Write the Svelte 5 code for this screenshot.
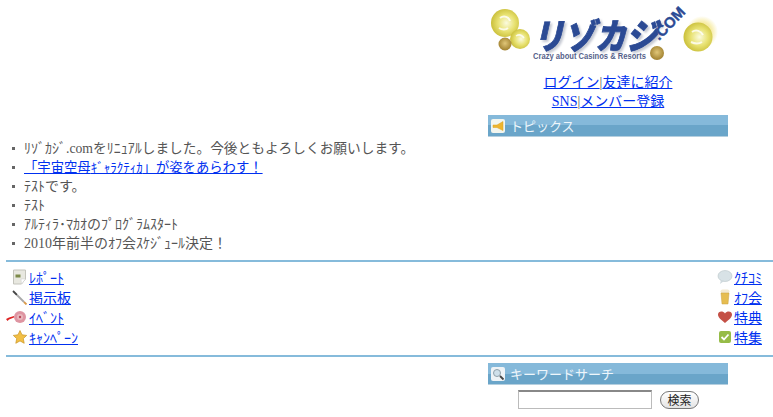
<script>
  const parts = (t) => t.split(/([\uFF61-\uFF9F]+)/).filter(Boolean).map((s) => ({ s, half: /^[\uFF61-\uFF9F]/.test(s) }));
  const news = [
    { t: 'ﾘｿﾞｶｼﾞ.comをﾘﾆｭｱﾙしました。今後ともよろしくお願いします。', cls: 'mid' },
    { t: '「宇宙空母ｷﾞｬﾗｸﾃｨｶ」が姿をあらわす！', link: true, cls: 'tight' },
    { t: 'ﾃｽﾄです。' },
    { t: 'ﾃｽﾄ' },
    { t: 'ｱﾙﾃｨﾗ･ﾏｶｵのﾌﾟﾛｸﾞﾗﾑｽﾀｰﾄ' },
    { t: '2010年前半のｵﾌ会ｽｹｼﾞｭｰﾙ決定！' }
  ];
</script>

{#snippet rich(t)}
  {#each parts(t) as p}{#if p.half}<span class="hk">{p.s}</span>{:else}{p.s}{/if}{/each}
{/snippet}

<div class="page">
  <section class="side head">
    <svg class="logo" width="228" height="62" viewBox="0 0 228 62" aria-label="logo">
      <defs>
        <radialGradient id="coin" cx="55%" cy="50%" r="60%">
          <stop offset="0" stop-color="#fbfbe0" />
          <stop offset="0.5" stop-color="#e8e272" />
          <stop offset="1" stop-color="#c4b82e" />
        </radialGradient>
        <radialGradient id="bronze" cx="50%" cy="45%" r="60%">
          <stop offset="0" stop-color="#e0c678" />
          <stop offset="1" stop-color="#9a7a28" />
        </radialGradient>
        <radialGradient id="glow">
          <stop offset="0.6" stop-color="#f2e070" stop-opacity=".6" />
          <stop offset="1" stop-color="#f2e070" stop-opacity="0" />
        </radialGradient>
      </defs>
      <circle cx="212" cy="28" r="16" fill="url(#glow)" />
      <circle cx="15" cy="19" r="14" fill="url(#coin)" />
      <path d="M10 14c4-3 9-1 10 3M9 24c3 2 7 2 9 0" stroke="#fff" stroke-width="2" fill="none" opacity=".8" />
      <circle cx="30" cy="35" r="10" fill="url(#coin)" />
      <path d="M26 32c3-2 6-1 8 2" stroke="#fff" stroke-width="1.500" fill="none" opacity=".8" />
      <circle cx="15" cy="40" r="6.500" fill="url(#bronze)" />
      <circle cx="208" cy="33" r="14.500" fill="url(#coin)" />
      <path d="M202 28c4-3 9-1 11 3M201 38c4 2 8 2 11 0" stroke="#fff" stroke-width="2" fill="none" opacity=".8" />
      <circle cx="167" cy="49" r="7" fill="url(#bronze)" />
      <text class="lg-main" x="43" y="45" textLength="124" lengthAdjust="spacingAndGlyphs">リゾカジ</text>
      <text class="lg-sub" x="43" y="55" textLength="113" lengthAdjust="spacingAndGlyphs">Crazy about Casinos &amp; Resorts</text>
      <text class="lg-com" transform="translate(169 37) rotate(-46)">.COM</text>
    </svg>
    <div class="links">
      <div><a href="#a">ログイン</a><span class="sep">|</span><a href="#a">友達に紹介</a></div>
      <div><a href="#a">SNS</a><span class="sep">|</span><a href="#a">メンバー登録</a></div>
    </div>
    <div class="bar">
      <svg width="16" height="16" viewBox="0 0 16 16">
        <rect x="1" y="1" width="14" height="14" rx="2" fill="#f2f5ee" />
        <path d="M3 7h4l6-3.500v9L7 9.500H3z" fill="#eeb52e" stroke="#dba01e" stroke-width=".5" />
      </svg>
      <span>トピックス</span>
    </div>
  </section>

  <ul class="news">
    {#each news as n}
      <li class={n.cls}>{#if n.link}<a href="#a">{@render rich(n.t)}</a>{:else}{@render rich(n.t)}{/if}</li>
    {/each}
  </ul>

  <hr />

  <nav class="menus">
    <div class="col">
      <div class="item">
        <svg class="ic" width="16" height="16" viewBox="0 0 16 16"><path d="M1.500 1h12v9l-4 5h-8z" fill="#e8e8e0" stroke="#c4c4bc" /><rect x="3.500" y="5.500" width="5" height="3" fill="#7d8a4a" /><path d="M9.500 15l-.5-5h4.500z" fill="#fff" stroke="#ccc" stroke-width=".5" /></svg>
        <a href="#a">ﾚﾎﾟｰﾄ</a>
      </div>
      <div class="item">
        <svg class="ic" width="16" height="16" viewBox="0 0 16 16"><path d="M1 2l4 4" stroke="#444" stroke-width="1.800" /><path d="M5 6l7 7" stroke="#a8a8a8" stroke-width="1.800" /><path d="M12 13l2.500 2.500" stroke="#d99a4a" stroke-width="1.800" /></svg>
        <a href="#a">掲示板</a>
      </div>
      <div class="item">
        <svg class="ic" width="16" height="16" viewBox="0 0 16 16"><circle cx="8" cy="8" r="6" fill="#de95a2" /><circle cx="8" cy="8" r="3" fill="#e8b8bd" /><circle cx="8" cy="8" r="1.200" fill="#b8485a" /></svg>
        <svg class="arrow" width="8" height="5" viewBox="0 0 8 5"><path d="M0 3L3 1.500 8 0v1.500L3 3.500 1.500 5z" fill="#d22" /></svg>
        <a href="#a">ｲﾍﾞﾝﾄ</a>
      </div>
      <div class="item">
        <svg class="ic" width="16" height="16" viewBox="0 0 16 16"><path d="M8 1.500l2 4.300 4.700.6-3.400 3.200.9 4.700L8 11.900l-4.200 2.400.9-4.700L1.300 6.400 6 5.800z" fill="#f2bf45" stroke="#c89324" stroke-width=".7" /></svg>
        <a href="#a">ｷｬﾝﾍﾟｰﾝ</a>
      </div>
    </div>
    <div class="col">
      <div class="item">
        <svg class="ic" width="16" height="16" viewBox="0 0 16 16"><ellipse cx="8" cy="7" rx="7" ry="5.500" fill="#d8e2e6" stroke="#b8c4c8" stroke-width=".6" /><path d="M4 11l-1 4 4-3z" fill="#d0dade" /></svg>
        <a href="#a">ｸﾁｺﾐ</a>
      </div>
      <div class="item">
        <svg class="ic" width="16" height="16" viewBox="0 0 16 16"><rect x="3.500" y="0.500" width="9" height="4" rx="2" fill="#f4ead0" /><path d="M4 4h8l-1 11H5z" fill="#e6bd50" stroke="#c8a040" stroke-width=".5" /></svg>
        <a href="#a">ｵﾌ会</a>
      </div>
      <div class="item">
        <svg class="ic" width="16" height="16" viewBox="0 0 16 16"><path d="M8 14C3 10 1 8 1 5.500C1 2 6 1.500 8 4.500C10 1.500 15 2 15 5.500C15 8 13 10 8 14z" fill="#c45046" /></svg>
        <a href="#a">特典</a>
      </div>
      <div class="item">
        <svg class="ic" width="16" height="16" viewBox="0 0 16 16"><rect x="2" y="2" width="12" height="12" rx="2" fill="#96bc48" /><path d="M4.500 8l2.500 2.500 4.500-5" stroke="#fff" stroke-width="1.800" fill="none" /></svg>
        <a href="#a">特集</a>
      </div>
    </div>
  </nav>

  <hr />

  <section class="side search">
    <div class="bar">
      <svg width="16" height="16" viewBox="0 0 16 16">
        <rect x="1" y="1" width="14" height="14" rx="2" fill="#eef3f6" />
        <circle cx="7" cy="7" r="3.500" fill="#cfe0ea" stroke="#8fa0aa" />
        <path d="M10 10l3.500 3.500" stroke="#444" stroke-width="1.800" />
      </svg>
      <span>キーワードサーチ</span>
    </div>
    <div class="form">
      <input type="text" />
      <button type="button">検索</button>
    </div>
  </section>
</div>

<style>
  :global(body) {
    margin: 0;
    background: #fff;
  }
  .page {
    width: 773px;
    height: 417px;
    overflow: hidden;
    font-family: "Liberation Serif", "Noto Sans CJK JP", serif;
    font-size: 14px;
    color: #555;
  }
  a {
    color: #0030f0;
  }
  .side {
    margin-left: 488px;
    width: 240px;
  }
  .head {
    padding-top: 4px;
    text-align: center;
  }
  .logo {
    display: block;
    margin-left: 2px;
  }
  .lg-main {
    font-family: "Noto Sans CJK JP", sans-serif;
    font-weight: 900;
    font-size: 35px;
    font-style: italic;
    fill: #2b4a94;
    stroke: #2b4a94;
    stroke-width: 0.8px;
    filter: drop-shadow(2px 2px 1px #c4c8d2);
  }
  .lg-sub {
    font-family: "Liberation Sans", sans-serif;
    font-size: 9px;
    font-weight: 700;
    fill: #56628a;
  }
  .lg-com {
    font-family: "Liberation Sans", sans-serif;
    font-weight: 700;
    font-size: 15px;
    fill: #2b4a94;
    stroke: #2b4a94;
    stroke-width: 0.4px;
  }
  .links {
    margin-top: 7px;
    line-height: 19px;
  }
  .bar {
    margin-top: 4px;
    height: 21px;
    display: flex;
    align-items: center;
    gap: 4px;
    padding-left: 2px;
    background: linear-gradient(#85b9da 0 50%, #6aa5c9 50% 100%);
    border-bottom: 1px solid #b5cfdf;
    color: #eef6fb;
    font-family: "Noto Sans CJK JP", sans-serif;
    font-size: 13px;
    line-height: 1;
  }
  .news {
    list-style: none;
    margin: 2px 0 0;
    padding: 0 0 0 24px;
    height: 121px;
    line-height: 19px;
  }
  .news li {
    position: relative;
    white-space: nowrap;
    height: 19px;
  }
  .news .mid {
    font-size: 13.7px;
  }
  .news .tight {
    font-size: 13.33px;
  }
  .hk {
    font-size: 14px;
  }
  .tight .hk {
    font-size: 13px;
  }
  .news li::before {
    content: "";
    position: absolute;
    left: -12px;
    top: 8px;
    width: 3px;
    height: 3px;
    background: #666;
  }
  hr {
    margin: 0 0 0 6px;
    height: 2px;
    border: 0;
    background: #86bbdb;
  }
  .menus {
    display: flex;
    justify-content: space-between;
    height: 93px;
    padding: 7px 11px 0 12px;
    box-sizing: border-box;
  }
  .col {
    display: flex;
    flex-direction: column;
  }
  .item {
    position: relative;
    height: 20px;
    display: flex;
    align-items: center;
    gap: 1px;
    line-height: 20px;
    white-space: nowrap;
  }
  .ic {
    margin-top: -5px;
  }
  .arrow {
    position: absolute;
    left: -6px;
    top: 7px;
  }
  .search .bar {
    margin-top: 6px;
  }
  .form {
    display: flex;
    align-items: center;
    margin-top: 5px;
    padding-left: 30px;
    gap: 8px;
  }
  input {
    width: 134px;
    height: 19px;
    box-sizing: border-box;
    margin: 0;
    padding: 0;
    background: #fff;
    border: 1px solid #bbb;
    border-top: 2px solid #888;
  }
  button {
    width: 39px;
    height: 18px;
    padding: 0;
    border: 1px solid #777;
    border-radius: 9px;
    background: linear-gradient(#fff, #e4e4e4);
    font-family: "Noto Sans CJK JP", sans-serif;
    font-size: 12px;
    line-height: 1;
    color: #222;
  }
</style>
